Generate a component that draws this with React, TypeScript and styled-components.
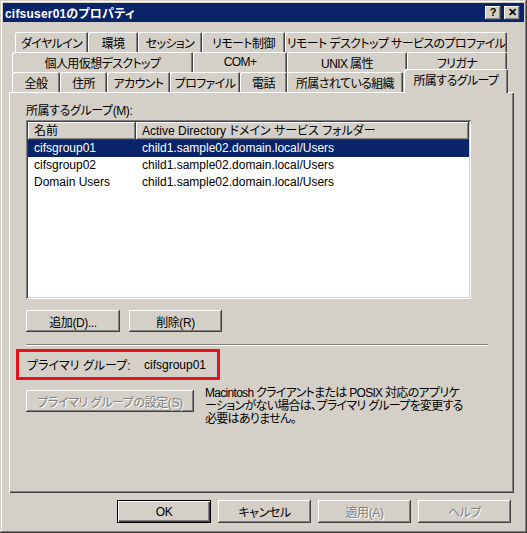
import React from "react";
import styled, { createGlobalStyle, css } from "styled-components";

const GlobalStyle = createGlobalStyle`
  html, body {
    margin: 0;
    padding: 0;
    background: #d4d0c8;
  }
  body {
    font-family: "Liberation Sans", "Noto Sans CJK JP", sans-serif;
    font-size: 12px;
    color: #000;
  }
  * {
    box-sizing: border-box;
  }
`;

// classic 3D edges
const raisedEdge = css`
  box-shadow: inset -1px -1px #404040, inset 1px 1px #ffffff,
    inset -2px -2px #808080, inset 2px 2px #d4d0c8;
`;

const sunkenEdge = css`
  box-shadow: inset 1px 1px #808080, inset -1px -1px #ffffff,
    inset 2px 2px #404040, inset -2px -2px #d4d0c8;
`;

const disabledText = css`
  color: #808080;
  text-shadow: 1px 1px 0 #ffffff;
`;

const Window = styled.div`
  width: 527px;
  height: 533px;
  padding: 3px;
  background: #d4d0c8;
  display: flex;
  flex-direction: column;
  font-feature-settings: "palt";
  box-shadow: inset -1px -1px #404040, inset 1px 1px #d4d0c8,
    inset -2px -2px #808080, inset 2px 2px #ffffff;
`;

const TitleBar = styled.div`
  height: 19px;
  background: #0a246a;
  display: flex;
  align-items: center;
  justify-content: space-between;
  padding: 0 4px 0 2px;
`;

const Title = styled.span`
  color: #fff;
  font-weight: bold;
  font-size: 12px;
  letter-spacing: 0.2px;
`;

const TitleButtons = styled.div`
  display: flex;
  gap: 3px;
`;

const TitleButton = styled.div`
  width: 16px;
  height: 14px;
  background: #d4d0c8;
  ${raisedEdge};
  display: flex;
  align-items: center;
  justify-content: center;
  font-weight: bold;
  font-size: 11px;
  line-height: 1;
  color: #000;
`;

const Body = styled.div`
  flex: 1;
  display: flex;
  flex-direction: column;
  padding: 10px 10px 0 6px;
`;

const TabStrip = styled.div`
  display: flex;
  flex-direction: column;
`;

const TabRow = styled.div<{ $indent: number }>`
  display: flex;
  height: 20px;
  padding-left: ${(p) => p.$indent}px;
`;

const Tab = styled.div<{ $w: number; $active?: boolean }>`
  width: ${(p) => p.$w}px;
  height: 20px;
  display: flex;
  align-items: center;
  justify-content: center;
  white-space: nowrap;
  letter-spacing: -0.6px;
  border-radius: 2px 2px 0 0;
  box-shadow: inset 1px 1px #ffffff, inset -1px 0 #404040, inset -2px 0 #808080;
  ${(p) =>
    p.$active &&
    css`
      position: relative;
      z-index: 1;
      height: 24px;
      margin-top: -3px;
      margin-left: 1px;
      padding-bottom: 3px;
      background: #d4d0c8;
    `}
`;

const Panel = styled.div`
  height: 401px;
  display: flex;
  flex-direction: column;
  padding: 12px 12px 0 17px;
  box-shadow: inset 1px 1px #ffffff, inset -1px -1px #404040,
    inset -2px -2px #808080;
`;

const FieldLabel = styled.div`
  line-height: 15px;
  height: 15px;
  letter-spacing: -0.4px;
`;

const ListView = styled.div`
  margin-top: 1px;
  width: 445px;
  height: 179px;
  padding: 2px;
  background: #fff;
  ${sunkenEdge};
  display: flex;
  flex-direction: column;
`;

const ListHeader = styled.div`
  display: flex;
  height: 18px;
`;

const HeaderCell = styled.div<{ $w: number }>`
  width: ${(p) => p.$w}px;
  height: 18px;
  line-height: 18px;
  padding-left: 6px;
  background: #d4d0c8;
  white-space: nowrap;
  overflow: hidden;
  ${raisedEdge};
`;

const ListRow = styled.div<{ $selected?: boolean }>`
  display: flex;
  height: 17px;
  line-height: 17px;
  background: ${(p) => (p.$selected ? "#0a246a" : "transparent")};
  color: ${(p) => (p.$selected ? "#ffffff" : "#000000")};
`;

const Cell = styled.div<{ $w: number }>`
  width: ${(p) => p.$w}px;
  padding-left: 6px;
  white-space: nowrap;
  overflow: hidden;
`;

const ButtonGroup = styled.div<{ $gap: number; $top: number }>`
  display: flex;
  gap: ${(p) => p.$gap}px;
  margin-top: ${(p) => p.$top}px;
`;

const Button = styled.button<{ $w: number; $h?: number; $default?: boolean }>`
  width: ${(p) => p.$w}px;
  height: ${(p) => p.$h ?? 22}px;
  padding: 0;
  border: none;
  background: #d4d0c8;
  font: inherit;
  letter-spacing: -0.4px;
  color: #000;
  white-space: nowrap;
  ${(p) =>
    p.$default
      ? css`
          box-shadow: inset 1px 1px #000000, inset -1px -1px #000000,
            inset 2px 2px #ffffff, inset -2px -2px #404040,
            inset -3px -3px #808080;
        `
      : raisedEdge};
  &:disabled {
    ${disabledText};
  }
`;

const Separator = styled.div`
  height: 2px;
  margin: 12px 14px 0 0;
  border-top: 1px solid #808080;
  border-bottom: 1px solid #ffffff;
`;

const Highlight = styled.div`
  display: flex;
  align-items: center;
  width: 204px;
  height: 31px;
  margin: 3px 0 0 -10px;
  padding-left: 8px;
  border: 3px solid #e3141c;
`;

const PrimaryLabel = styled.span`
  width: 117px;
`;

const PrimaryRow = styled.div`
  display: flex;
  align-items: flex-start;
  gap: 11px;
  margin-top: 10px;
`;

const Note = styled.p`
  margin: -3px 0 0;
  line-height: 13px;
  letter-spacing: -0.7px;
`;

const Footer = styled.div`
  display: flex;
  justify-content: flex-end;
  gap: 7px;
  margin-top: 7px;
  padding-right: 3px;
`;

const tabRows = [
  {
    indent: 6,
    tabs: [
      { label: "ダイヤルイン", w: 73 },
      { label: "環境", w: 50 },
      { label: "セッション", w: 64 },
      { label: "リモート制御", w: 83 },
      { label: "リモート デスクトップ サービスのプロファイル", w: 222 },
    ],
  },
  {
    indent: 3,
    tabs: [
      { label: "個人用仮想デスクトップ", w: 181 },
      { label: "COM+", w: 94 },
      { label: "UNIX 属性", w: 120 },
      { label: "フリガナ", w: 100 },
    ],
  },
  {
    indent: 3,
    tabs: [
      { label: "全般", w: 48 },
      { label: "住所", w: 47 },
      { label: "アカウント", w: 63 },
      { label: "プロファイル", w: 70 },
      { label: "電話", w: 47 },
      { label: "所属されている組織", w: 116 },
      { label: "所属するグループ", w: 104, active: true },
    ],
  },
];

const groups = [
  { name: "cifsgroup01", folder: "child1.sample02.domain.local/Users" },
  { name: "cifsgroup02", folder: "child1.sample02.domain.local/Users" },
  { name: "Domain Users", folder: "child1.sample02.domain.local/Users" },
];

const App: React.FC = () => {
  return (
    <>
      <GlobalStyle />
      <Window>
        <TitleBar>
          <Title>cifsuser01のプロパティ</Title>
          <TitleButtons>
            <TitleButton>?</TitleButton>
            <TitleButton>✕</TitleButton>
          </TitleButtons>
        </TitleBar>
        <Body>
          <TabStrip>
            {tabRows.map((row, i) => (
              <TabRow key={i} $indent={row.indent}>
                {row.tabs.map((t) => (
                  <Tab key={t.label} $w={t.w} $active={"active" in t && t.active}>
                    {t.label}
                  </Tab>
                ))}
              </TabRow>
            ))}
          </TabStrip>
          <Panel>
            <FieldLabel>所属するグループ(M):</FieldLabel>
            <ListView>
              <ListHeader>
                <HeaderCell $w={108}>名前</HeaderCell>
                <HeaderCell $w={333}>Active Directory ドメイン サービス フォルダー</HeaderCell>
              </ListHeader>
              {groups.map((g, i) => (
                <ListRow key={g.name} $selected={i === 0}>
                  <Cell $w={108}>{g.name}</Cell>
                  <Cell $w={333}>{g.folder}</Cell>
                </ListRow>
              ))}
            </ListView>
            <ButtonGroup $gap={9} $top={11}>
              <Button $w={94}>追加(D)...</Button>
              <Button $w={93}>削除(R)</Button>
            </ButtonGroup>
            <Separator />
            <Highlight>
              <PrimaryLabel>プライマリ グループ:</PrimaryLabel>
              <span>cifsgroup01</span>
            </Highlight>
            <PrimaryRow>
              <Button $w={168} disabled>
                プライマリ グループの設定(S)
              </Button>
              <Note>
                Macintosh クライアントまたは POSIX 対応のアプリケ
                <br />
                ーションがない場合は、プライマリ グループを変更する
                <br />
                必要はありません。
              </Note>
            </PrimaryRow>
          </Panel>
          <Footer>
            <Button $w={94} $h={23} $default>
              OK
            </Button>
            <Button $w={93} $h={23}>
              キャンセル
            </Button>
            <Button $w={93} $h={23} disabled>
              適用(A)
            </Button>
            <Button $w={93} $h={23} disabled>
              ヘルプ
            </Button>
          </Footer>
        </Body>
      </Window>
    </>
  );
};

export default App;
